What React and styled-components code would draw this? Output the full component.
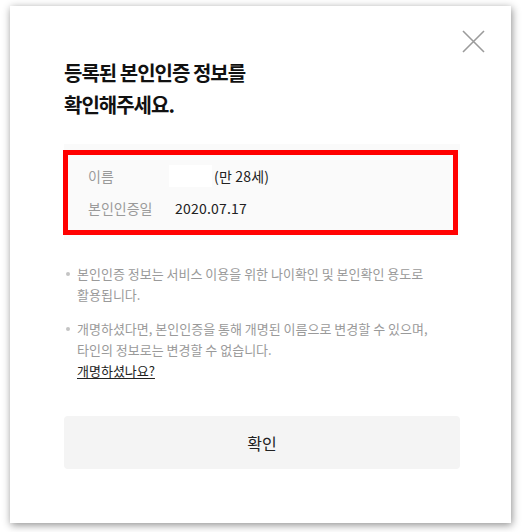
import React from 'react'
import styled, { createGlobalStyle } from 'styled-components'

const GlobalStyle = createGlobalStyle`
  html, body {
    margin: 0;
    padding: 0;
    background: #fff;
  }
  body {
    font-family: "Noto Sans CJK KR", "Noto Sans", sans-serif;
    -webkit-font-smoothing: antialiased;
  }
`

const Page = styled.div`
  padding: 6px 11px 9px 10px;
`

const Modal = styled.div`
  width: 501px;
  height: 517px;
  box-sizing: border-box;
  background: #fff;
  box-shadow: 1px 2px 8px rgba(0, 0, 0, 0.45);
  display: flex;
  flex-direction: column;
  padding: 0 51px 0 54px;
`

const Header = styled.div`
  display: flex;
  justify-content: flex-end;
  padding-top: 24px;
  margin-right: -25px;
`

const CloseButton = styled.button`
  width: 23px;
  height: 23px;
  padding: 0;
  border: 0;
  background: none;
  cursor: pointer;
  display: flex;
`

const Title = styled.h2`
  margin: 4px 0 0 0;
  font-size: 20px;
  line-height: 32px;
  font-weight: 700;
  color: #111;
  letter-spacing: -1px;
`

const InfoBox = styled.div`
  position: relative;
  margin-top: 23px;
  background: #fafafa;
  padding: 16px 24px;
`

const Highlight = styled.div`
  position: absolute;
  left: -1px;
  top: 6px;
  right: 2px;
  bottom: 5px;
  border: 5px solid #ff0000;
  pointer-events: none;
`

const Row = styled.div`
  display: flex;
  align-items: center;
  height: 32px;
  font-size: 14px;
`

const Label = styled.span`
  width: 87px;
  flex: none;
  color: #9a9a9a;
`

const Value = styled.span`
  display: flex;
  align-items: center;
  color: #222;
  letter-spacing: 0.2px;
`

const Redact = styled.span`
  display: inline-block;
  width: 43px;
  height: 22px;
  margin-left: -6px;
  margin-right: 2px;
  background: #fff;
`

const Notes = styled.ul`
  list-style: none;
  margin: 23px 0 0 0;
  padding: 0;
  display: flex;
  flex-direction: column;
  gap: 13px;
`

const Note = styled.li`
  position: relative;
  padding-left: 13px;
  font-size: 13px;
  line-height: 21px;
  color: #9a9a9a;

  &::before {
    content: '';
    position: absolute;
    left: 2px;
    top: 9px;
    width: 4px;
    height: 4px;
    border-radius: 50%;
    background: #c4c4c4;
  }
`

const Link = styled.a`
  display: inline-block;
  color: #222;
  text-decoration: underline;
  text-underline-offset: 2px;
`

const ConfirmButton = styled.button`
  margin-top: 35px;
  height: 53px;
  width: 100%;
  border: 0;
  border-radius: 4px;
  background: #f4f4f4;
  font-family: inherit;
  font-size: 16px;
  font-weight: 400;
  color: #222;
  cursor: pointer;
`

export default function App() {
  return (
    <>
      <GlobalStyle />
      <Page>
        <Modal>
          <Header>
            <CloseButton aria-label="닫기">
              <svg width="23" height="23" viewBox="0 0 23 23">
                <path d="M1 1 L22 22 M22 1 L1 22" stroke="#9b9b9b" strokeWidth="1.6" fill="none" />
              </svg>
            </CloseButton>
          </Header>
          <Title>
            등록된 본인인증 정보를
            <br />
            확인해주세요.
          </Title>
          <InfoBox>
            <Row>
              <Label>이름</Label>
              <Value>
                <Redact />
                (만 28세)
              </Value>
            </Row>
            <Row>
              <Label>본인인증일</Label>
              <Value>2020.07.17</Value>
            </Row>
            <Highlight />
          </InfoBox>
          <Notes>
            <Note>
              본인인증 정보는 서비스 이용을 위한 나이확인 및 본인확인 용도로
              <br />
              활용됩니다.
            </Note>
            <Note>
              개명하셨다면, 본인인증을 통해 개명된 이름으로 변경할 수 있으며,
              <br />
              타인의 정보로는 변경할 수 없습니다.
              <br />
              <Link href="#">개명하셨나요?</Link>
            </Note>
          </Notes>
          <ConfirmButton>확인</ConfirmButton>
        </Modal>
      </Page>
    </>
  )
}
